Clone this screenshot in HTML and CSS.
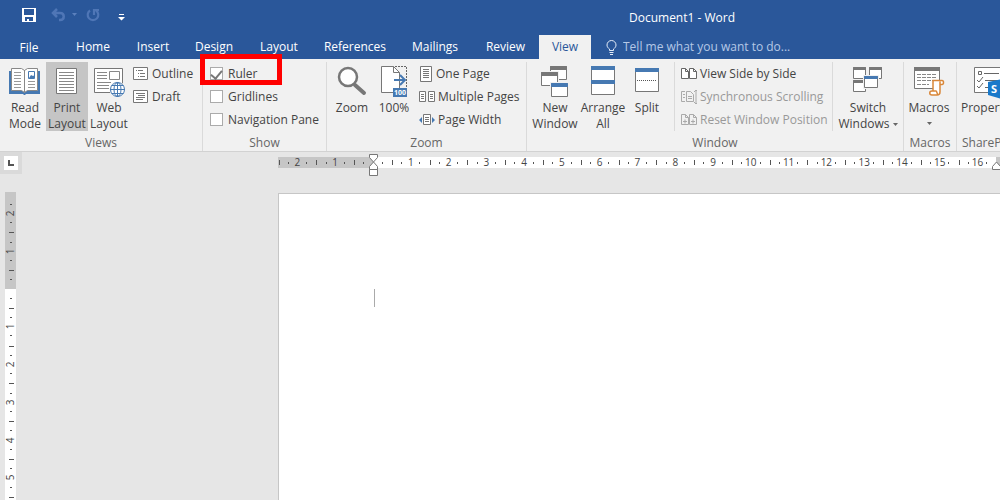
FILE: index.html
```html
<!DOCTYPE html>
<html lang="en">
<head>
<meta charset="utf-8">
<title>Document1 - Word</title>
<link rel="stylesheet" href="styles.css">
</head>
<body>
<header class="top">
  <div class="titlebar">
    <div class="quick">
      <button class="qbtn save" aria-label="Save"><svg width="14" height="14" viewBox="0 0 14 14"><path fill="#fff" fill-rule="evenodd" d="M0 0h14v14H0zM2 1v6h10V1zM3 9v4h2v-2h2v2h4V9z"/></svg></button>
      <button class="qbtn undo" aria-label="Undo"><svg width="26" height="14" viewBox="0 0 26 14" fill="none" stroke="#4f76b6" stroke-width="2.500"><path d="M6 1 2 5l4 4M2 5h7c5 0 5 7 0 7H8"/><path d="M21 5h5l-2.500 3z" fill="#5b80bd" stroke="none"/></svg></button>
      <button class="qbtn redo" aria-label="Repeat"><svg width="14" height="14" viewBox="0 0 14 14" fill="none" stroke="#4f76b6" stroke-width="2.200"><path d="M4 2.500a5.300 5.300 0 1 0 6 0M8 7V2h5"/></svg></button>
      <button class="qbtn more" aria-label="Customize Quick Access Toolbar"><svg width="7" height="7" viewBox="0 0 7 7"><path fill="#fff" d="M1 0h5v1H1zM0 3h7L3.500 6.500z"/></svg></button>
    </div>
    <div class="title">Document1 - Word</div>
  </div>
  <nav class="tabs">
    <button class="tab file">File</button>
    <button class="tab">Home</button>
    <button class="tab">Insert</button>
    <button class="tab">Design</button>
    <button class="tab">Layout</button>
    <button class="tab">References</button>
    <button class="tab">Mailings</button>
    <button class="tab">Review</button>
    <button class="tab active">View</button>
    <label class="tell">
      <svg width="11" height="15" viewBox="0 0 11 15" fill="none" stroke="#e4ecf8"><path d="M3.500 10.500V9C2 8 1 6.800 1 5a4.500 4.500 0 0 1 9 0c0 1.800-1 3-2.500 4v1.500zM3.500 12.500h4M4 14.500h3"/></svg>
      <input type="text" aria-label="Tell me" placeholder="Tell me what you want to do...">
    </label>
  </nav>
</header>

<section class="ribbon">
  <div class="group views">
    <div class="body">
      <button class="big">
        <svg width="42" height="38" viewBox="0 0 42 38" fill="none"><path fill="#4679b2" d="M5 9h31v23H22l-1 1h-1l-1-1H5z"/><path fill="#fff" stroke="#888" d="M7.500 6.500h10l3 2 3-2h10v22h-10l-3 2-3-2h-10z"/><path stroke="#888" d="M20.500 8v22"/><path stroke="#999" d="M10 10.500h7m-7 3h7m-7 3h7m-7 3h7m-7 3h7m-7 3h7M24 19.500h7m-7 3h7m-7 3h7"/><path fill="#fff" stroke="#4679b2" d="M24.500 9.500h6v7h-6z"/><path fill="#4679b2" d="M25 16l2-3 2 1 2-1v3z"/></svg>
        <span>Read<br>Mode</span></button>
      <button class="big pressed" aria-pressed="true">
        <svg width="42" height="38" viewBox="0 0 42 38" fill="none"><path fill="#fff" stroke="#777" d="M10.500 6.500h20v25h-20z"/><path stroke="#888" d="M13 10.500h15m-15 3h15m-15 3h15m-15 3h15m-15 3h15m-15 3h15m-15 3h15"/></svg>
        <span>Print<br>Layout</span></button>
      <button class="big">
        <svg width="42" height="38" viewBox="0 0 42 38" fill="none"><path fill="#fff" stroke="#777" d="M6.500 6.500h28v24h-28z"/><path stroke="#888" d="M9 10.500h10m-10 3h10m-10 3h10m-10 4h14m-14 3h12m-12 3h12M21.500 9.500h10v8h-10z"/><circle cx="29.500" cy="27.500" r="8" fill="#f1f1f1"/><g stroke="#4679b2"><circle cx="29.500" cy="27.500" r="7" fill="#fff"/><ellipse cx="29.500" cy="27.500" rx="3.500" ry="7"/><path d="M29.500 20v15M22 27.500h15M23.500 23.500h12M23.500 31.500h12"/></g></svg>
        <span>Web<br>Layout</span></button>
      <div class="list">
        <button class="small"><svg width="15" height="13" viewBox="0 0 15 13" fill="none" stroke="#777"><path fill="#fff" d="M.500.500h14v12H.500z"/><path d="M3 3.500h1m1 0h5M5 6.500h1m1 0h5M5 9.500h1m1 0h5"/></svg>Outline</button>
        <button class="small"><svg width="15" height="13" viewBox="0 0 15 13" fill="none" stroke="#777"><path fill="#fff" d="M.500.500h14v12H.500z"/><path d="M3 3.500h9M5 5.500h7M3 7.500h9M3 9.500h7"/></svg>Draft</button>
      </div>
    </div>
    <div class="caption">Views</div>
  </div>

  <div class="group show">
    <div class="body">
      <div class="list">
        <label class="check"><input type="checkbox" checked>Ruler</label>
        <label class="check"><input type="checkbox">Gridlines</label>
        <label class="check"><input type="checkbox">Navigation Pane</label>
      </div>
    </div>
    <div class="caption">Show</div>
    <div class="highlight"></div>
  </div>

  <div class="group zoom">
    <div class="body">
      <button class="big">
        <svg width="42" height="38" viewBox="0 0 42 38" fill="none" stroke="#777"><path stroke-width="4" stroke-linecap="round" d="M24 23l9 8"/><circle cx="17" cy="15" r="9" fill="#fff" stroke-width="2.500"/></svg>
        <span>Zoom</span></button>
      <button class="big">
        <svg width="42" height="38" viewBox="0 0 42 38" fill="none"><path fill="#fff" stroke="#777" d="M8.500 4.500h12l6 6v20h-18z"/><path stroke="#777" d="M20.500 4.500v6h6"/><path stroke="#666" stroke-dasharray="2 1" d="M22 4.500h11.500V26"/><path stroke="#4679b2" stroke-width="2" d="M21 18h10M27 13l5 5-5 5"/><path fill="#4679b2" d="M20 26h14v9H20z"/><text class="hundred" x="27" y="33">100</text></svg>
        <span>100%</span></button>
      <div class="list">
        <button class="small"><svg width="14" height="16" viewBox="0 0 14 16" fill="none" stroke="#777"><path fill="#fff" d="M1.500.500h11v15h-11z"/><path d="M4 3.500h6M4 5.500h6M4 7.500h6M4 9.500h6M4 11.500h6"/></svg>One Page</button>
        <button class="small"><svg width="16" height="12" viewBox="0 0 16 12" fill="none" stroke="#777"><path fill="#fff" d="M.500.500h6v10h-6zM9.500.500h6v10h-6z"/><path d="M2 3.500h3M2 5.500h3M2 7.500h3M11 3.500h3M11 5.500h3M11 7.500h3"/></svg>Multiple Pages</button>
        <button class="small"><svg width="16" height="12" viewBox="0 0 16 12" fill="none" stroke="#777"><path fill="#fff" d="M4.500.500h7v10h-7z"/><path d="M6 3.500h4M6 5.500h4M6 7.500h4"/><path fill="#4679b2" stroke="none" d="M3 3v6L0 6zM13 3v6l3-3z"/></svg>Page Width</button>
      </div>
    </div>
    <div class="caption">Zoom</div>
  </div>

  <div class="group window">
    <div class="body">
      <button class="big wide">
        <svg width="50" height="38" viewBox="0 0 50 38" fill="none" stroke="#777"><path fill="#fff" d="M20.500 4.500h16v13h-16z"/><path fill="#777" d="M20.500 4.500h16v3h-16z"/><path fill="#fff" stroke="#f1f1f1" stroke-width="3" d="M11.500 10.500h16v13h-16z"/><path fill="#fff" d="M11.500 10.500h16v13h-16z"/><path fill="#777" d="M11.500 10.500h16v3h-16z"/><path stroke="#f1f1f1" stroke-width="3" d="M21.500 21.500h16v13h-16z"/><path fill="#fff" d="M21.500 21.500h16v13h-16z"/><path fill="#4679b2" stroke="#4679b2" d="M21.500 21.500h16v3h-16z"/></svg>
        <span>New<br>Window</span></button>
      <button class="big mid">
        <svg width="46" height="38" viewBox="0 0 46 38" fill="none"><path fill="#fff" stroke="#777" d="M11.500 4.500h23v28h-23z"/><path fill="#4679b2" d="M11 4h24v4H11zM11 18h24v4H11z"/></svg>
        <span>Arrange<br>All</span></button>
      <button class="big">
        <svg width="42" height="38" viewBox="0 0 42 38" fill="none"><path fill="#fff" stroke="#777" d="M9.500 6.500h23v23h-23z"/><path fill="#4679b2" d="M9 6h24v4H9z"/><path stroke="#555" stroke-dasharray="1 1" d="M11 18.500h20"/></svg>
        <span>Split</span></button>
      <div class="list framed">
        <button class="small"><svg width="16" height="12" viewBox="0 0 16 12" fill="#fff" stroke="#666"><path d="M.500.500h4l3 3v7h-7zM8.500.500h4l3 3v7h-7z"/><path fill="none" d="M4.500.500v3h3M12.500.500v3h3"/></svg>View Side by Side</button>
        <button class="small" disabled><svg width="16" height="14" viewBox="0 0 16 14" fill="none" stroke="#aaa"><path d="M4 11.500H.500v-10H4M2 4.500h2M2 7.500h2M5.500 1.500h4l3 3v7h-7zM7 6.500h4M7 8.500h4M15 0v14M13 2l2-2 1 1M13 12l2 2 1-1"/></svg>Synchronous Scrolling</button>
        <button class="small" disabled><svg width="16" height="12" viewBox="0 0 16 12" fill="none" stroke="#aaa"><path d="M.500.500h4l3 3v7h-7zM8.500.500h4l3 3v7h-7zM4.500.500v3h3M12.500.500v3h3M2 7.500h4M4 5.500v4M10 7.500h4M12 5.500v4"/></svg>Reset Window Position</button>
      </div>
      <button class="big widest">
        <svg width="66" height="38" viewBox="0 0 66 38" fill="#fff" stroke="#777"><path d="M18.500 5.500h12v11h-12zM34.500 5.500h12v11h-12zM18.500 18.500h12v11h-12z"/><path fill="#777" d="M18.500 5.500h12v2h-12zM34.500 5.500h12v2h-12zM18.500 18.500h12v2h-12z"/><path stroke="#f1f1f1" stroke-width="3" d="M29.500 14.500h13v11h-13z"/><path d="M29.500 14.500h13v11h-13z"/><path fill="#4679b2" stroke="#4679b2" d="M29.500 14.500h13v2h-13z"/></svg>
        <span>Switch<br>Windows<svg class="drop" width="5" height="3" viewBox="0 0 5 3"><path fill="#666" d="M0 0h5L2.500 3z"/></svg></span></button>
    </div>
    <div class="caption">Window</div>
  </div>

  <div class="group macros">
    <div class="body">
      <button class="big wide">
        <svg width="50" height="38" viewBox="0 0 50 38" fill="none"><path fill="#fff" stroke="#777" d="M10.500 5.500h25v21h-25z"/><path fill="#777" d="M10 5h26v4H10z"/><path stroke="#888" stroke-dasharray="4 1" d="M13 12.500h20m-20 3h20m-20 3h20m-20 4h12"/><path fill="#fff" stroke="#d98739" stroke-width="1.500" d="M29 18.500h9c2 0 2 4 0 4h-2V30c0 3-2 3-3 3h-5c-3 0-3-4 0-4h1zM36 22.500v-3M28 29h4c1 0 1 3 2 4"/></svg>
        <span>Macros</span>
        <svg class="below" width="5" height="3" viewBox="0 0 5 3"><path fill="#666" d="M0 0h5L2.500 3z"/></svg></button>
    </div>
    <div class="caption">Macros</div>
  </div>

  <div class="group share">
    <div class="body">
      <button class="big widest">
        <svg width="66" height="38" viewBox="0 0 66 38" fill="none"><path fill="#fff" stroke="#777" d="M17.500 5.500h28v25h-28z"/><path stroke="#666" d="M21.500 9.500h3v3h-3zM20 18l2 2 4-5M20 24l2 2 4-5M27 11.500h15M28 18.500h15M28 25.500h5"/><path fill="#1979ca" d="M31 20l14-3v20l-14-4z"/><text class="s-mark" x="37" y="31">S</text></svg>
        <span>Properties</span></button>
    </div>
    <div class="caption">SharePoint</div>
  </div>
</section>

<main class="workspace">
  <div class="corner"><button class="tabstop" aria-label="Left Tab"><svg width="6" height="6" viewBox="0 0 6 6"><path fill="#555" d="M0 0h2v4h4v2H0z"/></svg></button></div>
  <div class="hruler">
    <div class="margin"><span class="cm">2</span><span class="cm">1</span><span class="origin"></span></div>
    <div class="extent"><span class="origin"></span><span class="cm">1</span><span class="cm">2</span><span class="cm">3</span><span class="cm">4</span><span class="cm">5</span><span class="cm">6</span><span class="cm">7</span><span class="cm">8</span><span class="cm">9</span><span class="cm">10</span><span class="cm">11</span><span class="cm">12</span><span class="cm">13</span><span class="cm">14</span><span class="cm">15</span><span class="cm">16</span>
      <svg class="indent left" width="9" height="22" viewBox="0 0 9 22" fill="#fff" stroke="#777"><path d="M.500.500h8v3L4.500 8l-4-4.500zM4.500 8l4 4.500v3h-8v-3zM.500 15.500h8v6h-8z"/></svg>
      <svg class="indent right" width="9" height="22" viewBox="0 0 9 22" fill="#fff" stroke="#777"><path d="M4.500 8l4 4.500v3h-8v-3z"/></svg>
    </div>
    <div class="margin rest"></div>
  </div>
  <div class="vruler">
    <div class="margin"><span class="cm first"><b>2</b></span><span class="cm"><b>1</b></span><span class="origin"></span></div>
    <div class="extent"><span class="origin"></span><span class="cm"><b>1</b></span><span class="cm"><b>2</b></span><span class="cm"><b>3</b></span><span class="cm"><b>4</b></span><span class="cm"><b>5</b></span><span class="cm"></span></div>
  </div>
  <div class="page"><span class="caret"></span></div>
</main>
</body>
</html>
```
FILE: styles.css
```css
* { box-sizing: border-box; }
body {
  margin: 0;
  height: 100vh;
  display: flex;
  flex-direction: column;
  overflow: hidden;
  background: #e6e6e6;
  color: #444;
  font: 12px/16px "Open Sans", "Noto Sans", sans-serif;
}
button, input { font: inherit; color: inherit; }
button { border: 0; padding: 0; background: none; }
svg { display: block; flex: none; }

.top { background: #2a579a; color: #fff; }
.titlebar { display: flex; height: 35px; }
.quick { display: flex; align-items: center; width: 364px; padding: 0 0 5px 22px; }
.undo { margin-left: 15px; }
.redo { margin-left: 9px; }
.more { margin-left: 18px; padding-top: 4px; }
.title { flex: 1; text-align: center; line-height: 36px; }

.tabs {
  display: grid;
  grid-template-columns: 62px 62px 58px 64px 66px 86px 74px 67px 52px 1fr;
  height: 24px;
}
.tab { text-align: center; line-height: 24px; }
.tab.file { padding: 2px 4px 0 0; line-height: 22px; }
.tab.active { background: #f1f1f1; color: #2a579a; }
.tell { display: flex; align-items: center; gap: 6px; padding-left: 15px; }
.tell input { flex: 1; padding: 0; border: 0; outline: 0; background: none; }
.tell input::placeholder { color: #b5c8e6; opacity: 1; }

.ribbon {
  display: flex;
  padding-top: 3px;
  background: #f1f1f1;
  border-bottom: 1px solid #d2d2d2;
}
.group { position: relative; flex: none; border-right: 1px solid #dadada; }
.body { display: flex; height: 69px; }
.caption { padding-top: 4px; text-align: center; color: #666; }
.views { width: 203px; }
.views .body { padding-left: 4px; }
.show { width: 124px; }
.show .body { padding-left: 4px; }
.zoom { width: 200px; }
.zoom .body { padding-left: 4px; }
.window { width: 377px; }
.window .body { padding-left: 3px; }
.macros { width: 53px; }
.share { width: 66px; border-right: 0; }
.share .caption { padding-left: 5px; text-align: left; }

.big {
  display: flex;
  flex-direction: column;
  align-items: center;
  flex: none;
  width: 42px;
  white-space: nowrap;
}
.big.mid { width: 46px; }
.big.wide { width: 50px; }
.big.widest { width: 66px; }
.pressed { background: #c5c5c5; }
.drop { display: inline-block; margin-left: 3px; vertical-align: middle; }
.below { margin-top: 6px; }
.list { display: flex; flex-direction: column; padding-left: 4px; }
.views .list, .show .list { padding-left: 3px; }
.list.framed { margin: 0 2px 0 6px; width: 159px; border: solid #dadada; border-width: 0 1px; padding-left: 6px; }
.small { display: flex; align-items: center; gap: 3px; height: 23px; white-space: nowrap; }
.small:disabled { color: #999; }
.views .small { gap: 4px; }
.check { display: flex; align-items: center; gap: 5px; height: 23px; white-space: nowrap; }
.check input {
  appearance: none;
  display: flex;
  justify-content: center;
  width: 13px;
  height: 13px;
  margin: 0;
  border: 1px solid #ababab;
  background: #fff;
}
.check input:checked::after {
  content: "";
  width: 5px;
  height: 9px;
  border: solid #777;
  border-width: 0 2px 2px 0;
  transform: rotate(40deg);
}
.highlight {
  position: absolute;
  left: -3px;
  top: -8px;
  width: 82px;
  height: 31px;
  border: 5px solid #f00;
  pointer-events: none;
}
.hundred { fill: #fff; font: bold 7px "Open Sans", sans-serif; text-anchor: middle; }
.s-mark { fill: #fff; font: bold 11px "Open Sans", sans-serif; text-anchor: middle; }

.workspace {
  flex: 1;
  min-height: 0;
  display: grid;
  grid-template-columns: 278px 1fr;
  grid-template-rows: 41px 1fr;
}
.corner { width: 22px; height: 22px; padding: 4px; background: #dadada; }
.tabstop { display: grid; place-items: center; width: 14px; height: 14px; background: #fff; }

.hruler, .vruler { display: flex; font-size: 10px; line-height: 11px; }
.hruler { height: 11px; margin-top: 5px; }
.vruler { flex-direction: column; width: 11px; margin: -1px 0 0 5px; overflow: hidden; }
.margin { display: flex; justify-content: flex-end; background: #c6c6c6; }
.extent { display: flex; position: relative; background: #fff; }
.hruler .margin { width: 95px; }
.hruler .extent { flex: none; }
.hruler .rest { flex: 1; width: auto; }
.vruler .margin { height: 97px; flex: none; }
.vruler .margin, .vruler .extent { flex-direction: column; }
.cm, .origin { flex: none; background-repeat: no-repeat; }
.hruler .cm {
  width: 1cm;
  text-align: center;
  background-image: linear-gradient(#555, #555), linear-gradient(#555, #555), linear-gradient(#555, #555);
  background-size: 1px 5px, 1px 2px, 1px 2px;
  background-position: 0 50%, 25% 50%, 75% 50%;
}
.hruler .origin {
  width: 5mm;
  background-image: linear-gradient(#555, #555), linear-gradient(#555, #555);
  background-size: 1px 2px, 1px 5px;
  background-position: 50% 50%, 0 50%;
}
.hruler .extent .origin { background-size: 1px 2px, 0 0; }
.vruler .cm {
  display: grid;
  place-items: center;
  height: 1cm;
  background-image: linear-gradient(#555, #555), linear-gradient(#555, #555), linear-gradient(#555, #555);
  background-size: 2px 1px, 2px 1px, 5px 1px;
  background-position: 60% 25%, 60% 75%, 60% 0;
}
.vruler .cm.first { background-size: 2px 1px, 2px 1px, 0 0; }
.vruler .cm b { font-weight: 400; transform: rotate(-90deg); }
.vruler .origin {
  height: 5mm;
  background-image: linear-gradient(#555, #555), linear-gradient(#555, #555);
  background-size: 2px 1px, 5px 1px;
  background-position: 60% 50%, 60% 0;
}
.vruler .extent .origin { background-size: 2px 1px, 0 0; }
.indent { position: absolute; top: -3px; }
.indent.left { left: -4px; }
.indent.right { right: -5px; z-index: 1; }

.page { padding: 95px 0 0 95px; background: #fff; border: solid #c6c6c6; border-width: 1px 0 0 1px; }
.caret { display: block; width: 1px; height: 18px; background: #aaa; }
```
